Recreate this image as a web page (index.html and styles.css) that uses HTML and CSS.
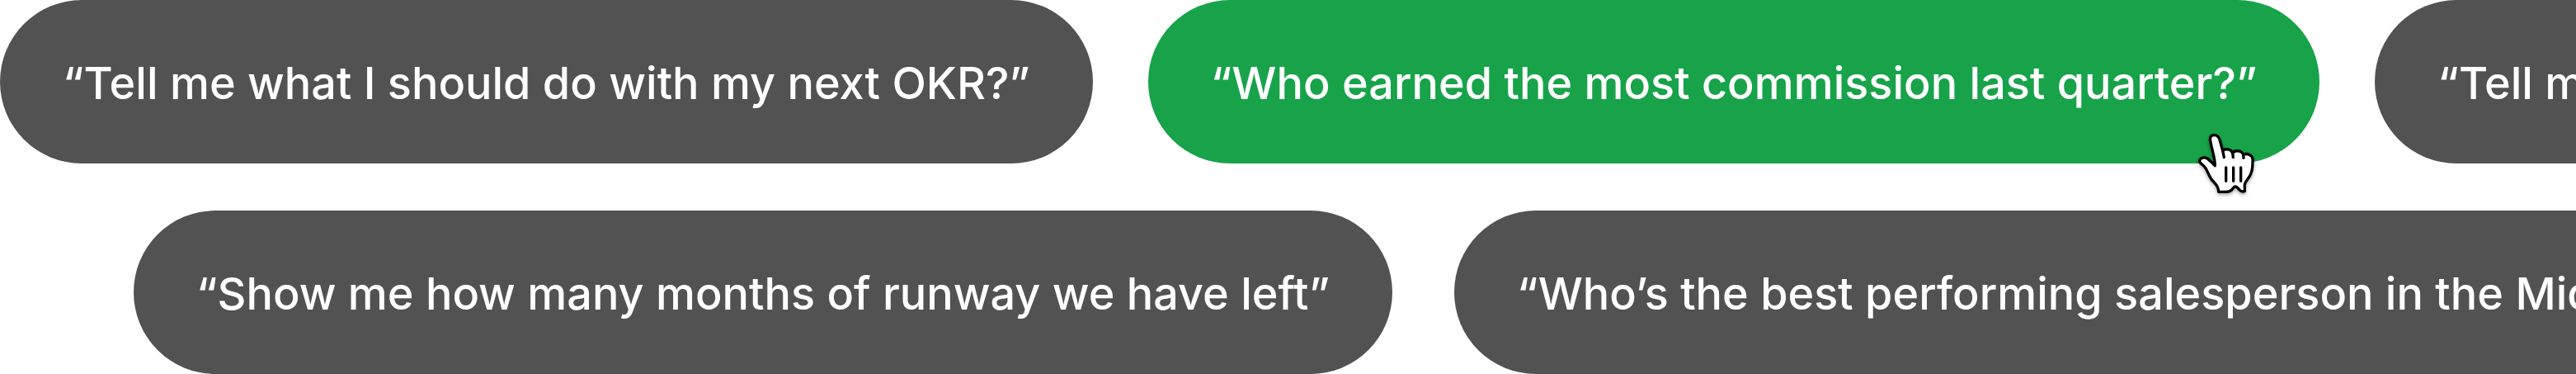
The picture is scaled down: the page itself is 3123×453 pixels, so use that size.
FILE: index.html
```html
<!DOCTYPE html>
<html lang="en">
<head>
<meta charset="utf-8">
<title>Suggested prompts</title>
<link rel="stylesheet" href="styles.css">
</head>
<body>
<main class="prompts">
  <div class="row">
    <button class="pill" type="button">“Tell me what I should do with my next OKR?”</button>
    <div class="slot">
      <button class="pill active" type="button">“Who earned the most commission last quarter?”</button>
      <svg class="cursor" viewBox="0 0 360 330" aria-hidden="true">
        <path d="M117 95C112 79 119 71 130 71C142 71 148 79 151 91L161 128C168 119 191 120 197 136C206 124 230 126 236 142C250 136 268 142 270 158C271 188 268 208 258 222C246 240 239 244 241 262V275C233 277 226 275 222 270C214 260 211 258 207 258C203 258 198 264 194 270C188 276 180 277 171 277H146C147 261 137 251 123 235C110 219 105 198 97 188C88 177 76 173 77 164C80 152 95 150 105 156C114 162 125 175 133 182C133 150 120 120 117 95Z"/>
        <path d="M161 127L166 152M197 134L199 152M236 140L237 154M173 189V238M200 189V238M227 189V238"/>
      </svg>
    </div>
    <button class="pill" type="button">“Tell me what our churn looks like”</button>
  </div>
  <div class="row second">
    <button class="pill" type="button">“Show me how many months of runway we have left”</button>
    <button class="pill" type="button">“Who’s the best performing salesperson in the Midwest?”</button>
  </div>
</main>
</body>
</html>
```
FILE: styles.css
```css
body {
  margin: 0;
  background: #fff;
  overflow: hidden;
}

.prompts {
  display: flex;
  flex-direction: column;
  gap: 57px;
  overflow: hidden;
}

.row {
  display: flex;
  gap: 67px;
}

.second {
  padding-left: 162px;
  gap: 75px;
}

.slot {
  position: relative;
  flex: none;
}

.pill {
  flex: none;
  border: 0;
  border-radius: 99px;
  padding: 68px 76px 64px;
  background: #525252;
  color: #fff;
  font: 500 54px/66px Inter, sans-serif;
  white-space: nowrap;
}

.active {
  background: #18a34a;
}

.cursor {
  position: absolute;
  right: 51px;
  bottom: -52px;
  width: 120px;
  height: 110px;
  fill: #fff;
  stroke: #000;
  stroke-width: 10px;
  stroke-linecap: round;
  stroke-linejoin: round;
  filter: drop-shadow(0 2px 2px rgb(0 0 0 / 35%));
}
```
